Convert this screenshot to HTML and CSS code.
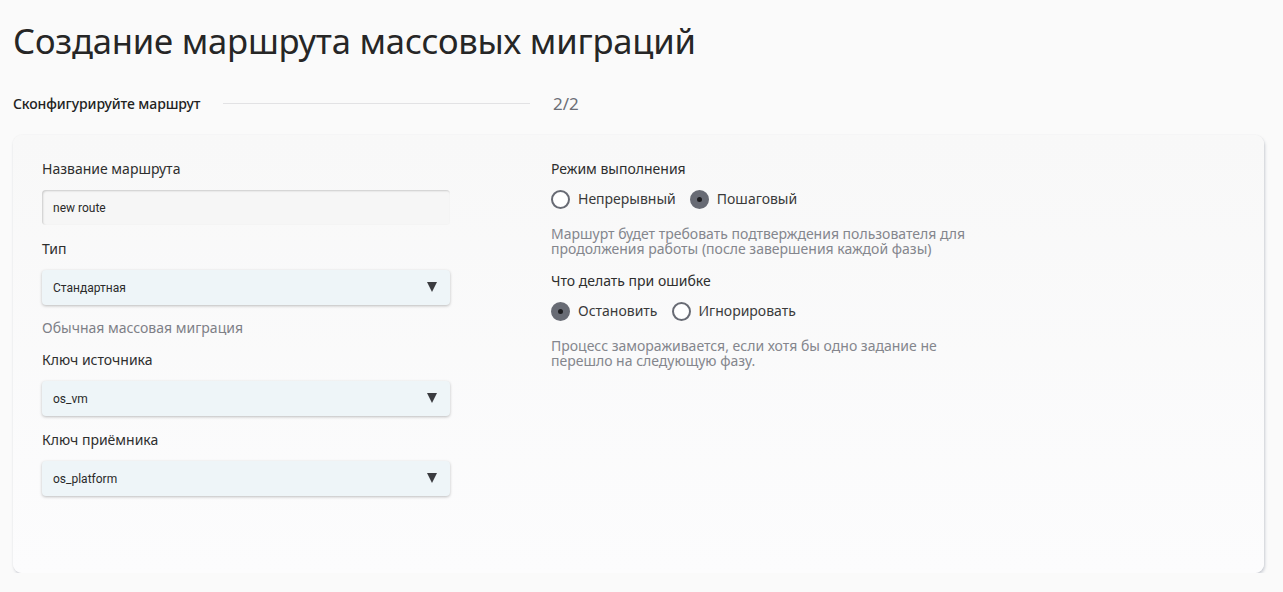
FILE: index.html
```html
<!DOCTYPE html>
<html lang="ru">
<head>
<meta charset="utf-8">
<title>Создание маршрута массовых миграций</title>
<link rel="stylesheet" href="styles.css">
</head>
<body>
<div class="page">
  <h1 class="title">Создание маршрута массовых миграций</h1>
  <div class="stepper">
    <span class="step-name">Сконфигурируйте маршрут</span>
    <span class="step-line"></span>
    <span class="step-count">2/2</span>
  </div>
  <div class="card">
    <div class="col-left">
      <div class="field">
        <div class="label">Название маршрута</div>
        <div class="input">new route</div>
      </div>
      <div class="field">
        <div class="label">Тип</div>
        <div class="select"><span>Стандартная</span><span class="caret"></span></div>
        <div class="hint">Обычная массовая миграция</div>
      </div>
      <div class="field">
        <div class="label">Ключ источника</div>
        <div class="select"><span>os_vm</span><span class="caret"></span></div>
      </div>
      <div class="field">
        <div class="label">Ключ приёмника</div>
        <div class="select"><span>os_platform</span><span class="caret"></span></div>
      </div>
    </div>
    <div class="col-right">
      <div class="group">
        <div class="label">Режим выполнения</div>
        <div class="radios">
          <label class="radio"><span class="dot"></span>Непрерывный</label>
          <label class="radio checked"><span class="dot"></span>Пошаговый</label>
        </div>
        <div class="desc">Маршурт будет требовать подтверждения пользователя для продолжения работы (после завершения каждой фазы)</div>
      </div>
      <div class="group">
        <div class="label">Что делать при ошибке</div>
        <div class="radios">
          <label class="radio checked"><span class="dot"></span>Остановить</label>
          <label class="radio"><span class="dot"></span>Игнорировать</label>
        </div>
        <div class="desc">Процесс замораживается, если хотя бы одно задание не перешло на следующую фазу.</div>
      </div>
    </div>
  </div>
</div>
</body>
</html>
```

FILE: styles.css
```css
html, body {
  margin: 0;
  padding: 0;
  background: #fafafa;
}
body {
  font-family: "Noto Sans", "Open Sans", sans-serif;
  color: #2b2b2b;
}
.page {
  padding: 18px 18px 0 13px;
}
.title {
  margin: 0;
  font-size: 34.6px;
  font-weight: 400;
  line-height: 46px;
  color: #262626;
  letter-spacing: -0.2px;
}
.stepper {
  display: flex;
  align-items: center;
  margin-top: 26px;
  height: 26px;
}
.step-name {
  font-size: 14px;
  font-weight: 500;
  color: #222;
  width: 210px;
  letter-spacing: -0.1px;
}
.step-line {
  width: 307px;
  height: 1px;
  background: #e2e2e4;
}
.step-count {
  margin-left: 23px;
  font-size: 17px;
  color: #6b6e76;
}
.card {
  margin-top: 19px;
  width: 1251px;
  height: 438px;
  box-sizing: border-box;
  border-radius: 9px;
  background: linear-gradient(#f8f8f8, #fcfcfd);
  box-shadow: 0 0 2px rgba(0,0,0,0.06), 1px 2px 3px rgba(120,130,150,0.35);
  padding: 24px 29px;
  display: flex;
  gap: 101px;
}
.col-left {
  width: 408px;
  display: flex;
  flex-direction: column;
}
.field {
  display: flex;
  flex-direction: column;
}
.label {
  font-size: 14px;
  line-height: 20px;
  color: #2e2e2e;
  margin-bottom: 11px;
}
.field + .field {
  margin-top: 14px;
}
.input, .select {
  height: 35px;
  box-sizing: border-box;
  border-radius: 4px;
  font-family: Roboto, "Liberation Sans", sans-serif;
  font-size: 12px;
  color: #2a2a2a;
  display: flex;
  align-items: center;
  padding-left: 11px;
}
.input {
  background: #f6f6f6;
  box-shadow: inset 1px 1px 2px rgba(0,0,0,0.18);
}
.select {
  background: #eef5f8;
  box-shadow: 0 1px 3px rgba(0,0,0,0.25);
  justify-content: space-between;
  padding-right: 13px;
}
.caret {
  width: 0;
  height: 0;
  border-left: 5.5px solid transparent;
  border-right: 5.5px solid transparent;
  border-top: 10px solid #3b3c40;
  margin-top: -2px;
}
.hint {
  margin-top: 15px;
  font-size: 14px;
  line-height: 16px;
  color: #7e8087;
}
.col-right {
  width: 440px;
  display: flex;
  flex-direction: column;
}
.radios {
  display: flex;
  gap: 14px;
  margin-top: -1px;
}
.radio {
  display: flex;
  align-items: center;
  font-size: 14px;
  color: #3a3a3a;
  line-height: 20px;
}
.dot {
  width: 19px;
  height: 19px;
  box-sizing: border-box;
  border-radius: 50%;
  border: 2.5px solid #686b74;
  background: #fff;
  margin-right: 8px;
  display: flex;
  align-items: center;
  justify-content: center;
}
.radio.checked .dot {
  background: #686b74;
}
.radio.checked .dot::after {
  content: "";
  width: 5px;
  height: 5px;
  border-radius: 50%;
  background: #1d1d20;
}
.desc {
  margin-top: 17px;
  font-size: 14px;
  line-height: 15px;
  color: #84868d;
  width: 418px;
}
.group + .group {
  margin-top: 15px;
}
```
